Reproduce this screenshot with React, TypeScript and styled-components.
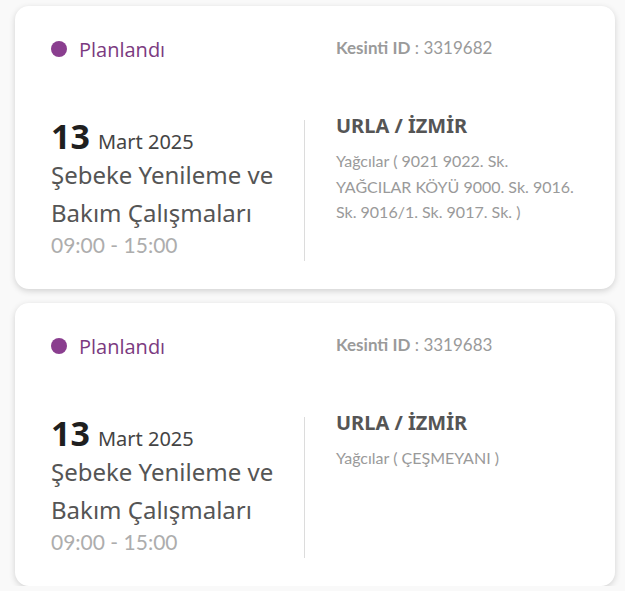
import styled, { createGlobalStyle } from 'styled-components';

interface Outage {
    id: string;
    status: string;
    day: string;
    monthYear: string;
    title: string;
    time: string;
    place: string;
    address: string;
}

const outages: Outage[] = [
    {
        id: '3319682',
        status: 'Planlandı',
        day: '13',
        monthYear: 'Mart 2025',
        title: 'Şebeke Yenileme ve Bakım Çalışmaları',
        time: '09:00 - 15:00',
        place: 'URLA / İZMİR',
        address: 'Yağcılar ( 9021 9022. Sk. YAĞCILAR KÖYÜ 9000. Sk. 9016. Sk. 9016/1. Sk. 9017. Sk. )',
    },
    {
        id: '3319683',
        status: 'Planlandı',
        day: '13',
        monthYear: 'Mart 2025',
        title: 'Şebeke Yenileme ve Bakım Çalışmaları',
        time: '09:00 - 15:00',
        place: 'URLA / İZMİR',
        address: 'Yağcılar ( ÇEŞMEYANI )',
    },
];

const App = () => {
    return (
        <>
            <GlobalStyle />
            <List>
                {outages.map(item => (
                    <Card key={item.id}>
                        <HeaderRow>
                            <Status>
                                <Dot />
                                {item.status}
                            </Status>
                            <OutageId>
                                <b>Kesinti ID</b> : {item.id}
                            </OutageId>
                        </HeaderRow>
                        <Body>
                            <LeftColumn>
                                <DateLine>
                                    <Day>{item.day}</Day>
                                    <MonthYear>{item.monthYear}</MonthYear>
                                </DateLine>
                                <Title>{item.title}</Title>
                                <Time>{item.time}</Time>
                            </LeftColumn>
                            <RightColumn>
                                <Place>{item.place}</Place>
                                <Address>{item.address}</Address>
                            </RightColumn>
                        </Body>
                    </Card>
                ))}
            </List>
        </>
    );
};

const GlobalStyle = createGlobalStyle`
    body {
        margin: 0;
        background: #f9f9f9;
        font-family: "Lato", sans-serif;
    }
`;

const List = styled.div`
    display: flex;
    flex-direction: column;
    gap: 14px;
    padding: 6px 10px 0 15px;
`;

const Card = styled.div`
    background: #fff;
    border-radius: 14px;
    box-shadow: 0 2px 6px rgba(0, 0, 0, 0.16);
    padding: 30px 36px 29px 36px;
    height: 283px;
    box-sizing: border-box;
`;

const HeaderRow = styled.div`
    display: grid;
    grid-template-columns: 285px 1fr;
    align-items: center;
    height: 28px;
`;

const Status = styled.div`
    display: flex;
    align-items: center;
    gap: 12px;
    font-family: "Open Sans", sans-serif;
    font-size: 20px;
    color: #7b3a80;
    margin-top: -2px;
`;

const Dot = styled.span`
    width: 16px;
    height: 16px;
    border-radius: 50%;
    background: #8a3e8f;
`;

const OutageId = styled.div`
    font-family: "Lato", sans-serif;
    font-size: 17px;
    color: #9a9a9a;
    margin-top: -6px;

    b {
        font-weight: 700;
    }
`;

const Body = styled.div`
    display: grid;
    grid-template-columns: 254px 1fr;
    margin-top: 56px;
`;

const LeftColumn = styled.div`
    border-right: 1px solid #dcdcdc;
    padding-bottom: 4px;
`;

const DateLine = styled.div`
    display: flex;
    align-items: baseline;
    gap: 8px;
    font-family: "Noto Sans", sans-serif;
    margin-top: -7px;
`;

const Day = styled.span`
    font-size: 34px;
    font-weight: 700;
    color: #1f1f1f;
`;

const MonthYear = styled.span`
    font-size: 20px;
    color: #444;
`;

const Title = styled.div`
    font-family: "Noto Sans", sans-serif;
    font-size: 24px;
    line-height: 38px;
    color: #555;
    margin-top: -3px;
`;

const Time = styled.div`
    font-family: "Lato", sans-serif;
    font-size: 21px;
    color: #adadad;
    margin-top: 0;
`;

const RightColumn = styled.div`
    padding-left: 31px;
    margin-top: -10px;
`;

const Place = styled.div`
    font-family: "Noto Sans", sans-serif;
    font-size: 20px;
    font-weight: 700;
    color: #555;
    line-height: 32px;
`;

const Address = styled.div`
    font-family: "Lato", sans-serif;
    font-size: 16px;
    line-height: 25.5px;
    color: #9a9a9a;
    margin-top: 6px;
`;

export default App;
